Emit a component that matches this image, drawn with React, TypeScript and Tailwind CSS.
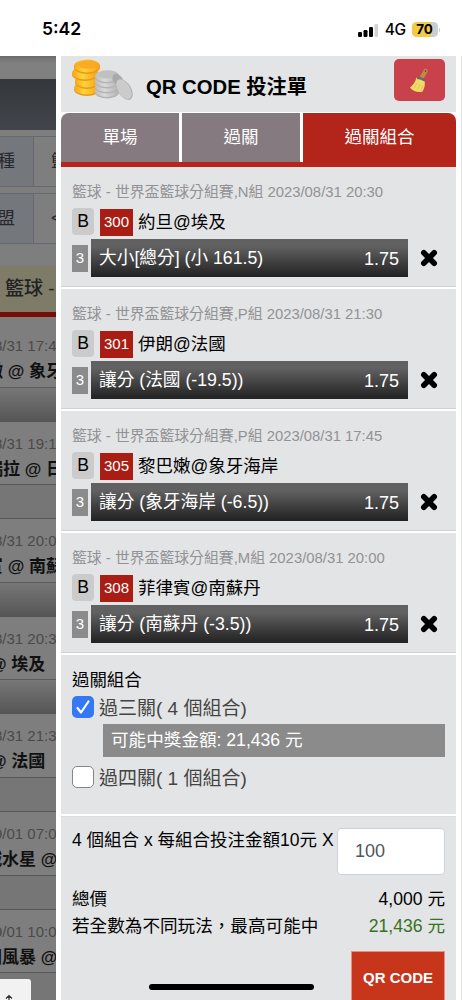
const bets = [
  { id: 300, group: 'N', time: '2023/08/31 20:30', teams: '約旦@埃及', pick: '大小[總分] (小 161.5)' },
  { id: 301, group: 'P', time: '2023/08/31 21:30', teams: '伊朗@法國', pick: '讓分 (法國 (-19.5))' },
  { id: 305, group: 'P', time: '2023/08/31 17:45', teams: '黎巴嫩@象牙海岸', pick: '讓分 (象牙海岸 (-6.5))' },
  { id: 308, group: 'M', time: '2023/08/31 20:00', teams: '菲律賓@南蘇丹', pick: '讓分 (南蘇丹 (-3.5))' },
];

const plain = 'h-[35px] border-y border-[#575757] bg-[#767676]';
const shaded = 'h-[35px] border-t border-[#5b5b5b] bg-linear-to-b from-[#777777] to-[#555555]';

const matches = [
  { time: '8/31 17:4', teams: '嫩 @ 象牙', shift: '-ml-[14px]', bar: shaded },
  { time: '8/31 19:1', teams: '瑞拉 @ 日', shift: '-ml-[14px]', bar: plain },
  { time: '8/31 20:0', teams: '賓 @ 南蘇', shift: '-ml-[14px]', bar: shaded },
  { time: '8/31 20:3', teams: '@ 埃及', shift: '-ml-[10px]', bar: shaded },
  { time: '8/31 21:3', teams: '@ 法國', shift: '-ml-[10px]', bar: plain },
  { time: '9/01 07:0', teams: '城水星 @', shift: '-ml-[15px]', bar: plain },
  { time: '9/01 10:0', teams: '圖風暴 @', shift: '-ml-[15px]', bar: plain },
];

function StatusBar() {
  return (
    <header className="flex h-[56px] shrink-0 items-center bg-white pt-[3px] pl-[42px] pr-[22px]">
      <span className="font-['Inter'] text-[17.5px] font-semibold">5:42</span>
      <svg className="ml-auto h-[14px] w-[21px]" viewBox="0 0 21 14">
        <rect x="0" y="9" width="4" height="5" rx="1.2" />
        <rect x="5.5" y="7" width="4" height="7" rx="1.2" />
        <rect x="11" y="4" width="4" height="10" rx="1.2" />
        <rect x="16.5" y="1" width="3.6" height="13" rx="1.2" fill="#d2d2d2" />
      </svg>
      <span className="ml-[6px] font-['Inter'] text-[15.5px] font-medium tracking-[-0.5px]">4G</span>
      <span className="ml-[6px] flex h-[15px] w-[26px] items-center justify-center rounded-[4.5px] bg-linear-to-r from-[#f3ca45] from-72% to-[#cdcdcd] to-72% font-['Inter'] text-[13.5px] font-bold">
        70
      </span>
      <span className="ml-[1px] h-[4px] w-[1.5px] rounded-r bg-[#c8c8c8]" />
    </header>
  );
}

function FilterRow({ label, value }: { label: string; value: string }) {
  return (
    <div className="mb-[6px] flex h-[51px] items-center border-y border-[#666a70] text-[17.5px] text-[#26282b]">
      <div className="flex h-full w-[34px] shrink-0 items-center justify-end border-r border-[#666a70] bg-[#74777b] pr-[18px]">
        <span className="whitespace-nowrap">{label}</span>
      </div>
      <span className="pl-[17px] whitespace-nowrap">{value}</span>
    </div>
  );
}

function Backdrop() {
  return (
    <aside className="relative h-[944px] w-[56px] shrink-0 overflow-hidden bg-[#7e7e7e]">
      <div className="h-[23px] bg-linear-to-b from-[#6c6c6c] to-[#808080] to-30%" />
      <div className="mb-[6px] h-[51px] bg-linear-to-b from-[#34373c] to-[#42464c]" />
      <FilterRow label="種" value="籃" />
      <FilterRow label="盟" value="<" />
      <div className="mt-[22px] mb-[7px] flex h-[51px] items-center border-b-[5px] border-[#780d08] bg-[#7e7b68] pl-[5px] text-[19px] font-medium whitespace-nowrap text-[#222]">
        籃球 -
      </div>
      {matches.map((m) => (
        <div key={m.time + m.teams}>
          <div className="h-[62.6px] pt-[10px] whitespace-nowrap">
            <div className="-ml-[6px] text-[15px] leading-[24px] text-[#4a4a4a]">{m.time}</div>
            <div className={`pt-px text-[17px] leading-[25px] font-bold text-[#111] ${m.shift}`}>{m.teams}</div>
          </div>
          <div className={m.bar} />
        </div>
      ))}
      <div className="absolute bottom-0 left-0 h-[21px] w-[31px] overflow-hidden rounded-tr-[3px] bg-[#f2f2f2] pt-[15px] pl-[5px]">
        <svg className="h-[14px] w-[8px]" viewBox="0 0 8 14" fill="none" stroke="#333" strokeWidth="1.2">
          <path d="M4 14V1.5M1 4.500L4 1.500L7 4.500" />
        </svg>
      </div>
    </aside>
  );
}

function Coins() {
  return (
    <svg className="h-[46px] w-[62px]" viewBox="0 0 62 46">
      <defs>
        <linearGradient id="gold">
          <stop offset="0" stopColor="#f5a81a" />
          <stop offset="0.4" stopColor="#ffd23f" />
          <stop offset="1" stopColor="#f3a012" />
        </linearGradient>
        <linearGradient id="silver">
          <stop offset="0" stopColor="#bdbdbd" />
          <stop offset="0.4" stopColor="#dadada" />
          <stop offset="1" stopColor="#b0b0b0" />
        </linearGradient>
      </defs>
      {[32, 25, 17, 10].map((y, i) => (
        <g key={y}>
          <ellipse cx={[16, 16, 14, 16][i]} cy={y + 1.5} rx={[13, 12, 13, 13][i]} ry="6.500" fill="#ee980f" />
          <ellipse cx={[16, 16, 14, 16][i]} cy={y} rx={[13, 12, 13, 13][i]} ry="6.500" fill="url(#gold)" />
        </g>
      ))}
      <ellipse cx="17" cy="8.500" rx="10" ry="4.200" fill="#fbab22" />
      {[35, 30, 25, 20].map((y) => (
        <g key={y}>
          <ellipse cx="36" cy={y + 1.5} rx="12" ry="6" fill="#b4b4b4" />
          <ellipse cx="36" cy={y} rx="12" ry="6" fill="url(#silver)" />
        </g>
      ))}
      <ellipse cx="36" cy="18.500" rx="9" ry="4" fill="#c0c0c0" />
      <ellipse cx="47" cy="24" rx="4.500" ry="7" fill="#a9a9a9" transform="rotate(-40 47 24)" />
      <ellipse cx="53.500" cy="33.500" rx="6.500" ry="11.500" fill="#a9a9a9" transform="rotate(-32 53.500 33.500)" />
      <ellipse cx="53" cy="33.200" rx="6" ry="11" fill="#cbcbcb" transform="rotate(-32 53 33.200)" />
    </svg>
  );
}

function Broom() {
  return (
    <svg className="h-[26px] w-[22px]" viewBox="0 0 22 26">
      <path d="M12.500 11L16.500 4" stroke="#c08a45" strokeWidth="4.400" strokeLinecap="round" />
      <path d="M16.500 3.500V4.500" stroke="#76431b" strokeWidth="1.200" strokeLinecap="round" />
      <path d="M7.500 10.500C6.500 15 4 18 1 20.500C3 23.500 7 25.500 13 25C15.500 22 16.500 17 15.500 13.500Z" fill="#f1dc68" />
      <path d="M8 16L5 21M11 17L8.500 23M13.500 18L12 24" stroke="#d9c04a" strokeWidth="0.800" />
      <path d="M8 10.800C11 10.800 14 11.800 16 13.800" stroke="#6f6270" strokeWidth="2.200" fill="none" />
    </svg>
  );
}

function BetItem({ bet }: { bet: (typeof bets)[number] }) {
  return (
    <article className="h-[122px] border-b-2 border-white pt-[12px]">
      <div className="-mx-px h-full border-b border-[#d1d1d1] pl-[12px]">
        <div className="h-[26px] text-[14.85px] leading-[27px] whitespace-nowrap text-[#929294]">
          籃球 - 世界盃籃球分組賽,{bet.group}組 {bet.time}
        </div>
        <div className="flex h-[34px] items-center">
          <span className="mt-[-1px] flex h-[27px] w-[22px] items-center justify-center rounded-[4px] bg-[#cbcbcb] text-[17.6px]">B</span>
          <span className="mt-px ml-[6px] flex h-[27px] w-[33px] items-center justify-center bg-[#a91d14] text-[15px] text-white">
            {bet.id}
          </span>
          <span className="ml-[5px] text-[17.5px] leading-[26px]">{bet.teams}</span>
        </div>
        <div className="flex h-[38px] items-center">
          <span className="flex h-[27px] w-[16px] items-center justify-center bg-[#8b8b8b] text-[15px] text-white">3</span>
          <div className="ml-[3px] flex h-[38px] w-[317px] items-center justify-between bg-linear-to-b from-[#616161] from-20% to-[#222] pr-[9px] pl-[8px] text-[17.7px] text-white">
            <span>{bet.pick}</span>
            <span className="pt-[2px] text-[18px]">1.75</span>
          </div>
          <svg className="ml-[12px] h-[18px] w-[18px]" viewBox="0 0 18 18">
            <path d="M3.800 3.800L14.200 14.200M14.200 3.800L3.800 14.200" stroke="#000" strokeWidth="5.600" strokeLinecap="round" />
          </svg>
        </div>
      </div>
    </article>
  );
}

export default function App() {
  return (
    <div className="relative flex h-[1000px] w-[462px] flex-col overflow-hidden bg-white font-['Liberation_Sans','Noto_Sans_CJK_TC',sans-serif] text-black">
      <StatusBar />
      <div className="flex">
        <Backdrop />
        <main className="ml-[5px] h-[944px] w-[395px] shrink-0 overflow-hidden bg-[#e3e4e6]">
          {/* Title */}
          <div className="flex h-[56px] pl-[10px]">
            <Coins />
            <h1 className="ml-[13px] pt-[16px] text-[20.3px] leading-[30px] font-bold whitespace-nowrap">QR CODE 投注單</h1>
            <button className="mt-[3px] mr-[11px] ml-auto flex h-[42px] w-[51px] items-center justify-center rounded-[5px] bg-[#c9414b]">
              <Broom />
            </button>
          </div>

          {/* Tabs */}
          <nav className="flex h-[55px] gap-[3px] border-b-[5px] border-[#b7251c] bg-white pt-px text-[17.5px] text-white">
            <div className="flex w-[118px] items-center justify-center rounded-tl-[8px] bg-[#857a80]">單場</div>
            <div className="flex w-[118px] items-center justify-center bg-[#857a80]">過關</div>
            <div className="flex flex-1 items-center justify-center rounded-tr-[8px] bg-[#b3241a]">過關組合</div>
          </nav>

          {bets.map((bet) => (
            <BetItem key={bet.id} bet={bet} />
          ))}

          {/* Combinations */}
          <section className="h-[161px] border-b-2 border-white pr-[11px] pl-[11px]">
            <h2 className="pt-[12px] text-[17.4px] leading-[26px]">過關組合</h2>
            <label className="flex h-[27px] items-center text-[19px] text-[#444]">
              <span className="mr-[5px] flex h-[22px] w-[22px] items-center justify-center rounded-[5px] bg-[#3478f6]">
                <svg className="h-[16px] w-[16px]" viewBox="0 0 16 16" fill="none" stroke="#fff" strokeWidth="2.200" strokeLinecap="round" strokeLinejoin="round">
                  <path d="M2.500 9L6 13.500L13.500 2.500" />
                </svg>
              </span>
              <span className="pt-[5px]">過三關( 4 個組合)</span>
            </label>
            <div className="mt-[4px] ml-[31px] flex h-[33px] items-center bg-[#8b8b8b] pl-[8px] text-[17.6px] text-white">可能中獎金額: 21,436 元</div>
            <label className="mt-[6px] flex h-[28px] items-center text-[19px] text-[#444]">
              <span className="mr-[5px] h-[22px] w-[22px] rounded-[5px] border-[1.5px] border-[#858587] bg-white" />
              <span className="pt-[5px]">過四關( 1 個組合)</span>
            </label>
          </section>

          {/* Totals */}
          <section className="border-t border-[#dcdcdc] pr-[11px] pl-[11px] text-[17.6px]">
            <div className="flex h-[69px] justify-between pt-[11px]">
              <span className="text-[17.5px] leading-[25px] whitespace-nowrap">4 個組合 x 每組合投注金額10元 X</span>
              <span className="flex h-[47px] w-[108px] shrink-0 items-center rounded-[4px] border border-[#ced1da] bg-white pl-[17px] text-[18px] text-[#50565d]">100</span>
            </div>
            <div className="flex h-[27px] items-center justify-between">
              <span>總價</span>
              <span>4,000 元</span>
            </div>
            <div className="flex h-[27px] items-center justify-between">
              <span>若全數為不同玩法，最高可能中</span>
              <span className="text-[#357321]">21,436 元</span>
            </div>
            <button className="mt-[11px] ml-auto flex h-[54px] w-[94px] items-center justify-center border border-[#e98d85] bg-[#c7351b] text-[15px] font-bold text-white">QR CODE</button>
          </section>
        </main>
        <div className="ml-[5px] h-[944px] w-px bg-[#e2e2de]" />
      </div>
      {/* Home indicator */}
      <div className="absolute top-[984px] left-[149px] h-[6px] w-[165px] rounded-full bg-black" />
    </div>
  );
}
